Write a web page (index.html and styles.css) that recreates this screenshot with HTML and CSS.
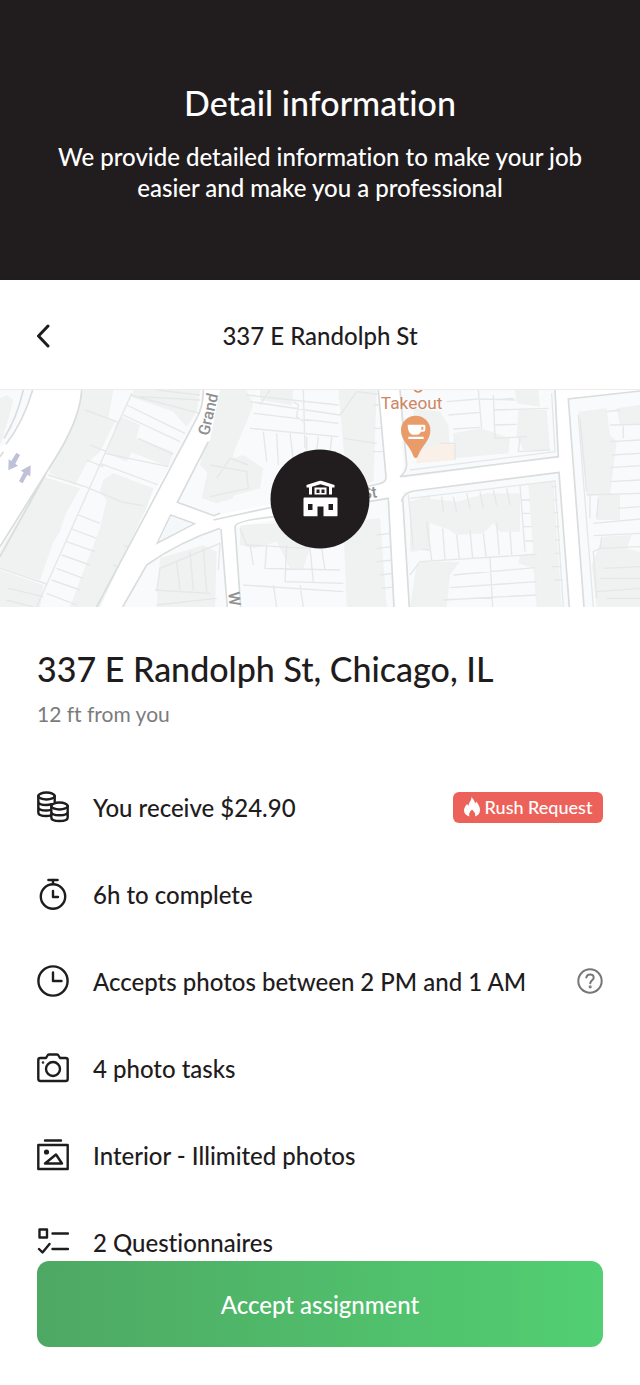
FILE: index.html
```html
<!DOCTYPE html>
<html lang="en">
<head>
<meta charset="utf-8">
<meta name="viewport" content="width=device-width, initial-scale=1">
<title>Detail information</title>
<link rel="stylesheet" href="styles.css">
</head>
<body>
<header class="intro">
  <h1 class="intro-title">Detail information</h1>
  <p class="intro-text">We provide detailed information to make your job easier and make you a professional</p>
</header>
<nav class="navbar">
  <button class="back" type="button" aria-label="Back">
    <svg width="14" height="24" viewBox="0 0 14 24"><path d="M12 2 2.5 12 12 22" fill="none" stroke="currentColor" stroke-width="3" stroke-linecap="round" stroke-linejoin="round"/></svg>
  </button>
  <h2 class="navbar-title">337 E Randolph St</h2>
</nav>
<section class="map" aria-label="Map">
  <svg class="map-art" viewBox="0 15 1920 651" preserveAspectRatio="xMidYMid slice">
    <rect y="15" width="1920" height="651" fill="#f8fafb"/>
    <!-- west blocks -->
    <g>
      <path class="bld" d="M250 15H340L325 100 345 110 300 200 260 235 225 300 150 265 145 250ZM130 275 240 310 195 390 180 440 160 470 120 585 0 550V500ZM350 110 365 95 420 120 400 190 380 230 320 205ZM410 160 520 200 505 245 390 200ZM310 285 340 265 460 310 440 370 370 510 310 666H210L250 560 300 430 320 345 300 320ZM400 15H600L590 80 560 125 520 80 395 35ZM0 555 130 600 120 666H0Z"/>
      <path class="lot" d="M395 25 110 666M390 30 600 85M380 60 555 145M370 90 540 170M415 160 520 208M315 205 505 245M300 235 475 300M260 225 310 245M270 180 320 200M255 75 350 110M145 270 255 305 370 352 430 362M235 390 300 415M215 432 290 460M200 470 285 500M185 510 270 540M170 550 250 580M155 585 240 615M140 625 230 660M0 550 140 597M25 610 130 635M20 645 100 666M370 480 390 490M340 540 365 550M420 35 600 45M470 15 600 30"/>
      <path class="road" d="M-20 15V190L15 180Q70 90 98 15H245Q240 100 150 240L0 485V540H-20Z"/>
      <path class="edge" d="M98 15Q70 110 18 178M0 215 10 200M245 15Q240 110 150 245L0 485M140 262 0 515M70 15Q50 100 12 160"/>
      <path class="bld" d="M0 40 20 30 40 45 20 120 0 180Z"/>
    </g>
    <!-- block beside Grand -->
    <path class="bld" d="M660 190 635 210 625 250 605 340 650 355 700 340V200Z"/>
    <!-- centre blocks -->
    <g transform="translate(630)">
      <path class="bld" d="M10 15H110L130 60 110 110 70 205 20 200 0 270-30 240ZM0 240 100 210 160 250 150 310 0 350ZM150 15H250L245 60 150 45ZM385 15H500L490 290 410 310 400 180ZM90 420 290 410 300 490 280 550 240 550 200 470 130 490 90 480ZM400 410 510 400 530 666H410ZM600 350 660 330V490L600 500ZM620 540 660 530V666H600ZM-150 520-20 480 20 500 15 666H-160Z"/>
      <path class="lot" d="M120 50 390 90M130 85 385 115M120 130 385 155M110 30 385 60M280 15 285 190M250 50 265 60 260 95 280 110M150 60 180 15M160 140 170 230M200 145 205 240M240 145 250 225M290 155V200M325 155 320 200M365 155 360 205M0 240 110 260 115 310 0 335M20 280 60 220 115 240M390 90 440 20M400 160 500 175M490 60H525M490 130H528M490 200H530M440 20 520 30M90 430 110 480 300 490M120 480 130 540M170 480 165 550 390 555M230 480 225 590 400 595M300 490 310 590M335 490 345 555M100 600 400 620M190 600 200 666M270 600 280 666M500 450 540 445M500 490 545 485M500 530 550 525M510 570 550 565M515 610 560 605M595 330 610 490 660 495M600 570 630 530 660 535M-165 615 0 625M-160 660 20 640M-100 530-90 615M-60 500-50 615M-20 490-10 620"/>
    </g>
    <!-- east blocks -->
    <g transform="translate(1260)">
      <path class="bld" d="M-20 70 60 80 85 120 90 200-20 210ZM100 145 180 130 215 140 270 160 265 205 100 220ZM285 15H355L360 65 290 55ZM295 75 380 75 390 195 310 195 290 155ZM20 340 110 350 200 325 300 325V440L240 440 220 415 190 445 110 450 90 435 20 410ZM325 300 400 290 425 666H350L340 550 295 535 300 510 340 505ZM0 530H120L90 570 80 666H0ZM-20 360 20 380V490L-20 500ZM475 80 560 70 570 150 590 170 570 330H500L480 150ZM590 70 660 60V120L600 120ZM535 330H600V405H530ZM550 455 635 450 620 490 660 500V666H530L515 540Z"/>
      <path fill="#faf0e7" d="M-10 220 10 190 80 175 103 180V225L-10 235Z"/>
      <path class="lot" d="M175 15 185 130M80 50 175 42M85 90 180 82M100 132 180 127M220 30 225 160 320 155M222 75 385 70M222 120 290 118M220 45 280 40M180 42 285 45M300 160 295 200 390 195M60 175H105V225M20 410 35 525M68 430 75 525M110 450 118 520M150 435 158 520M190 445 198 515M230 415 238 510M270 440 275 510M300 300 315 500M0 530 350 508M210 518 218 666M65 335 70 380M100 335 110 380M140 325 150 370M180 320 190 370M220 315 230 360M260 310 270 360M305 345H330M308 385H330M310 425H335M315 468H340M395 305H410M400 345H413M400 383H415M405 425H418M405 465H420M405 505H422M395 545H425M405 585H428M100 570 345 548M90 608 350 590M70 645 350 630M570 170 660 165M575 210 660 205M570 248 660 242M570 290 660 285M500 330 660 325M595 370 660 365M520 415 660 402M520 452 660 445M510 330V400M535 340 530 400M560 80 600 75M570 120 660 118M610 120V160M545 455 540 490 520 500 530 640M540 490 660 485M550 550 660 545M540 580 660 580M530 620 660 610M560 640 660 640M480 100 500 320"/>
    </g>
    <!-- streets -->
    <path class="road" d="M610 15 600 80 555 175 470 305 300 666H368L440 540 550 475 660 430 663 432 682 666H722L705 425 840 400 1130 345 1165 340 1182 666H1228L1208 320 1680 262 1708 666H1752L1705 45 1920 20V15H1665L1675 215 1210 280 1200 15H1135L1158 290 1110 300 840 352 640 392 532 352 630 165 660 15Z"/>
    <path class="edge" d="M610 15Q610 65 590 100L290 666M625 170 532 352 642 392 660 385M368 666 440 540Q540 470 660 430M512 390 583 416 472 474ZM1135 15 1158 275Q1160 292 1135 297L640 405M1200 15 1220 240Q1218 262 1200 275L1675 215 1665 15M1920 18 1705 42 1752 666M663 432 682 666M722 666 705 425Q710 405 830 395L1165 340 1182 666M1205 350Q1208 325 1240 318L1677 262 1708 666M1208 340 1228 666"/>
    <path class="inner" d="M1655 25 1665 200 1230 255M1230 340 1665 288 1690 666M1735 90 1780 666M470 620 480 550 660 475 655 555"/>
    <path fill="#f4f8fa" d="M513 395 578 416 477 468Z"/>
    <path fill="#bfc1d8" d="M49 203 60 210 46 236 54 242 25 256 26 223 34 228ZM57 289 68 295 82 269 91 274 92 241 62 257 71 262Z"/>
    <!-- cafe pin -->
    <path fill="#e99b69" d="M1247 92A44 44 0 0 1 1291 137C1291 167 1264 182 1253 215Q1247 223 1241 215C1231 182 1203 167 1203 137A44 44 0 0 1 1247 92Z"/>
    <path fill="#fff" d="M1223 119H1272Q1276 119 1276 123V135Q1276 140 1270 140H1263Q1259 149 1252 149H1238Q1223 145 1223 119ZM1264 125V134H1270V125ZM1225 155H1271V162H1225Z" fill-rule="evenodd"/>
    <text class="place" x="1235" y="71" text-anchor="middle">Takeout</text>
    <path d="M1243 15Q1254 27 1266 15" fill="none" stroke="#d98558" stroke-width="5"/>
    <text class="street" transform="translate(626 154) rotate(-77)">Grand</text>
    <text class="street" transform="translate(1088 343) rotate(-8)">St</text>
    <text class="street" transform="translate(685 622) rotate(85)">W</text>
  </svg>
  <div class="marker">
    <svg width="36" height="36" viewBox="0 0 36 36" fill="#fff"><path fill-rule="evenodd" d="M18 0 32 4.500V7H29.500V14H26.500V6.300L18 3.800 9.500 6.300V14H6.500V7H4V4.500ZM12 7H24V14H12ZM14 9V12.500H17V9ZM19 9V12.500H22V9ZM2 17H34Q35 17 35 18V35Q35 36 34 36H21V26H15V36H2Q1 36 1 35V18Q1 17 2 17ZM5.500 23.500V29.500H10V23.500ZM26 23.500V29.500H30.500V23.500Z"/></svg>
  </div>
</section>
<main class="details">
  <h2 class="address">337 E Randolph St, Chicago, IL</h2>
  <p class="distance">12 ft from you</p>
  <ul class="facts">
    <li class="fact">
      <svg class="icon" viewBox="0 0 32 32"><ellipse cx="9.500" cy="5" rx="8.200" ry="3.500"/><path d="M1.300 5V21.500C1.300 23.700 5 25 9.500 25 11 25 12 24.900 13 24.600M17.700 5V10.500M1.300 10.500C1.300 12.700 5 14 9.500 14 11.500 14 13 13.700 14.500 13.200M1.300 16C1.300 18.200 5 19.500 9.500 19.500 11 19.500 12 19.400 13 19.100"/><ellipse cx="22.500" cy="15" rx="8.200" ry="3.500"/><path d="M14.300 15V26.500C14.300 28.700 18 30 22.500 30S30.700 28.700 30.700 26.500V15M14.300 20.700C14.300 23 18 24.300 22.500 24.300S30.700 23 30.700 20.700"/></svg>
      <span class="fact-text">You receive $24.90</span>
      <span class="badge"><svg width="16" height="20" viewBox="0 0 16 20"><path fill="#fff" d="M7.500 0C9 2 11 4 11 6.500L12.500 4.500C14 7 16 9.500 16 13 16 16.500 14 18.500 11 19.500 12 17 10.500 15 8 12.500 5.500 15 4.500 17 5.500 19.500 2 18.500 0 16.500 0 13.500 0 11 1.500 9 3 7L4.500 9C4.500 5.500 7.500 4 7.500 0Z"/></svg>Rush Request</span>
    </li>
    <li class="fact">
      <svg class="icon" viewBox="0 0 32 32"><path d="M11.500 2H20.500" stroke-width="2.600"/><path d="M16 2V6M16 13V19H21"/><circle cx="16" cy="18.500" r="12.200"/></svg>
      <span class="fact-text">6h to complete</span>
    </li>
    <li class="fact">
      <svg class="icon" viewBox="0 0 32 32"><circle cx="16" cy="16" r="14.600"/><path d="M16 7.500V16H24.500"/></svg>
      <span class="fact-text">Accepts photos between 2 PM and 1 AM</span>
      <button class="help" type="button" aria-label="Help"><svg width="26" height="26" viewBox="0 0 26 26" fill="none" stroke="#77777a" stroke-width="2"><circle cx="13" cy="13" r="11.700"/><path d="M9.300 9.500C9.700 7.500 11.200 6.500 13 6.500 15.200 6.500 16.700 7.700 16.700 9.700 16.700 12.300 13.300 12.300 13.300 15.300" stroke-linecap="round"/><circle cx="13.200" cy="18.800" r=".6"/></svg></button>
    </li>
    <li class="fact">
      <svg class="icon" viewBox="0 0 32 32"><path d="M3.300 6H9L10.500 3.500Q11 2.500 12 2.500H20Q21 2.500 21.500 3.500L23 6H28.700Q30.700 6 30.700 8V27Q30.700 29 28.700 29H3.300Q1.300 29 1.300 27V8Q1.300 6 3.300 6Z"/><circle cx="16" cy="17" r="7"/><circle cx="6" cy="10.500" r=".5" stroke-width="1.600"/></svg>
      <span class="fact-text">4 photo tasks</span>
    </li>
    <li class="fact">
      <svg class="icon" viewBox="0 0 32 32"><path d="M8 1.500H24M1.300 6H30.700V30H1.300ZM8 24.500 19 15.500 25 24.500Z"/><circle cx="9.500" cy="13" r="1.400" fill="currentColor"/></svg>
      <span class="fact-text">Interior - Illimited photos</span>
    </li>
    <li class="fact">
      <svg class="icon" viewBox="0 0 32 32"><path d="M2.500 3.500H10V11.500H2.500ZM15.500 7.500H31M15.500 23H31M2 23 5.500 26.500 12.500 18"/></svg>
      <span class="fact-text">2 Questionnaires</span>
    </li>
  </ul>
  <button class="accept" type="button">Accept assignment</button>
</main>
</body>
</html>
```
FILE: styles.css
```css
* { box-sizing: border-box; }
body {
  margin: 0;
  background: #fff;
  color: #1f1c1d;
  font-family: Lato, "Liberation Sans", sans-serif;
  font-size: 24px;
  font-weight: 500;
  font-variant-ligatures: none;
}
h1, h2, p, ul { margin: 0; padding: 0; font-weight: 500; }
button { font: inherit; color: inherit; border: 0; background: none; padding: 0; cursor: pointer; }
svg { display: block; flex: none; }

.intro {
  padding: 79px 40px 77px;
  background: #211d1e;
  color: #fff;
  text-align: center;
}
.intro-title { font-size: 34px; line-height: 48px; margin-bottom: 14px; }
.intro-text { line-height: 31px; max-width: 560px; margin: 0 auto; }

.navbar {
  display: grid;
  grid-template-columns: 14px 1fr 14px;
  align-items: center;
  height: 110px;
  padding: 2px 36px 0;
  border-bottom: 1px solid #ececec;
}
.navbar-title { font-size: 24px; text-align: center; }

.map { position: relative; overflow: hidden; }
.map-art { width: 100%; height: auto; }
.bld { fill: #f0f1f1; }
.lot { fill: none; stroke: #e5e7e8; stroke-width: 4; }
.inner { fill: none; stroke: #e5e8e9; stroke-width: 4; }
.road { fill: #fff; }
.edge { fill: none; stroke: #dadddd; stroke-width: 5; }
.place { font: 52px Roboto, sans-serif; fill: #cd8764; }
.street { font: 500 48px Roboto, sans-serif; fill: #8e9092; }
.marker {
  position: absolute;
  top: 50%;
  left: 50%;
  transform: translate(-50%, -50%);
  display: grid;
  place-items: center;
  width: 99px;
  height: 99px;
  border-radius: 50%;
  background: #211d1e;
}

.details { padding: 38px 37px; }
.address { font-size: 34px; line-height: 48px; }
.distance { margin-top: 7px; font-size: 21px; line-height: 28px; color: #7b7b7e; font-weight: 400; }
.facts { display: grid; gap: 55px; margin-top: 63px; list-style: none; }
.fact { display: flex; align-items: center; gap: 24px; height: 32px; }
.fact-text { flex: 1; white-space: nowrap; }
.icon {
  width: 32px;
  height: 32px;
  fill: none;
  stroke: currentColor;
  stroke-width: 2.400;
  stroke-linecap: round;
  stroke-linejoin: round;
}
.badge {
  display: flex;
  align-items: center;
  justify-content: center;
  gap: 5px;
  width: 150px;
  height: 31px;
  border-radius: 6px;
  background: #ec625a;
  color: #fff;
  font-size: 18px;
}
.accept {
  display: block;
  width: 100%;
  height: 86px;
  margin-top: 3px;
  border-radius: 12px;
  background: linear-gradient(90deg, #4ea863, #52cf72);
  color: #fff;
}
```
